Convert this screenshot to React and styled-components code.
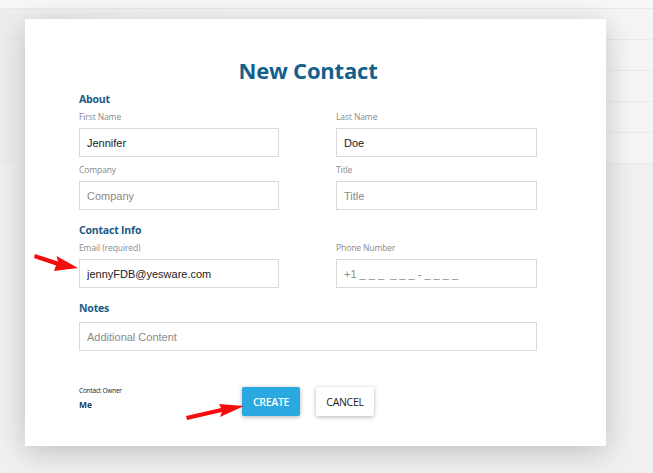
import React from "react";
import styled, { createGlobalStyle } from "styled-components";

const GlobalStyle = createGlobalStyle`
	html, body {
		margin: 0;
		padding: 0;
		background: #f0f0f0;
		font-family: "Liberation Sans", Arial, sans-serif;
	}
	#root {
		position: relative;
		width: 653px;
		height: 473px;
		overflow: hidden;
	}
`;

const S = {};
// faded list behind the modal
S.backdrop = styled.div`
	display: flex;
	flex-direction: column;
	width: 100%;
	height: 100%;
	background: #f0f0f0;
`;
S.topStrip = styled.div`
	height: 8px;
	background: #f7f7f7;
	border-bottom: 1px solid #e9e9e9;
`;
S.listRow = styled.div`
	height: 30px;
	background: linear-gradient(90deg, #eeeeee 0%, #f4f4f4 30%, #f5f5f5 100%);
	border-bottom: 1px solid #ebebeb;
`;

// modal
S.modal = styled.div`
	position: absolute;
	left: 25px;
	top: 19px;
	width: 581px;
	height: 427px;
	box-sizing: border-box;
	padding: 38px 69px 0 54px;
	background: #fff;
	box-shadow: 0 6px 28px rgba(0, 0, 0, 0.2);
	display: flex;
	flex-direction: column;
`;
S.title = styled.h1`
	margin: 0;
	text-align: center;
	font-family: "Open Sans", "Noto Sans", sans-serif;
	font-weight: 700;
	font-size: 22px;
	line-height: 26px;
	letter-spacing: -0.2px;
	color: #145f8c;
`;
S.sectionTitle = styled.h2`
	margin: ${(p) => p.$top || 0}px 0 0;
	font-family: "Open Sans", "Noto Sans", sans-serif;
	font-weight: 700;
	font-size: 10.5px;
	line-height: 14px;
	letter-spacing: -0.2px;
	color: #1b5a86;
`;
S.grid = styled.div`
	display: grid;
	grid-template-columns: 200px 201px;
	column-gap: 57px;
	row-gap: 7px;
	margin-top: 5px;
`;
S.field = styled.div`
	display: flex;
	flex-direction: column;
	gap: 5px;
`;
S.label = styled.label`
	font-family: "Open Sans", "Noto Sans", sans-serif;
	font-size: 8.5px;
	line-height: 12px;
	letter-spacing: -0.1px;
	color: #8a8a8a;
`;
S.input = styled.input`
	box-sizing: border-box;
	width: ${(p) => p.$width || "100%"};
	height: 29px;
	margin: ${(p) => p.$top || 0}px 0 0;
	padding: 0 7px;
	border: 1px solid #d9d9d9;
	border-radius: 0;
	outline: none;
	font-family: "Liberation Sans", Arial, sans-serif;
	font-size: 11px;
	color: #222;
	&::placeholder {
		color: #8a8a8a;
	}
`;
S.footer = styled.div`
	display: flex;
	align-items: flex-start;
	margin-top: 36px;
`;
S.owner = styled.div`
	width: 163px;
	display: flex;
	flex-direction: column;
`;
S.ownerLabel = styled.span`
	font-family: "Open Sans", "Noto Sans", sans-serif;
	font-size: 6.5px;
	line-height: 8px;
	letter-spacing: -0.2px;
	color: #1a1a1a;
`;
S.ownerName = styled.span`
	margin-top: 5px;
	font-family: "Open Sans", "Noto Sans", sans-serif;
	font-weight: 700;
	font-size: 8.5px;
	line-height: 10px;
	color: #1d3f63;
`;
S.buttons = styled.div`
	display: flex;
	gap: 16px;
`;
S.button = styled.button`
	width: 58px;
	height: 29px;
	padding: 0;
	border: none;
	border-radius: 2px;
	font-family: "Open Sans", "Noto Sans", sans-serif;
	font-weight: ${(p) => (p.$primary ? 600 : 400)};
	font-size: 10.5px;
	letter-spacing: -0.3px;
	color: ${(p) => (p.$primary ? "#fff" : "#1a1a1a")};
	background: ${(p) => (p.$primary ? "#2aa9e0" : "#fff")};
	box-shadow: 0 1px 4px rgba(0, 0, 0, 0.3);
`;
S.arrow = styled.svg`
	position: absolute;
	left: ${(p) => p.$x}px;
	top: ${(p) => p.$y}px;
	overflow: visible;
`;

function Field({ label, value, placeholder }) {
	return (
		<S.field>
			<S.label>{label}</S.label>
			<S.input defaultValue={value} placeholder={placeholder} />
		</S.field>
	);
}

function App() {
	return (
		<>
			<GlobalStyle />
			<S.backdrop>
				<S.topStrip />
				{[0, 1, 2, 3, 4].map((i) => (
					<S.listRow key={i} />
				))}
			</S.backdrop>

			<S.modal>
				<S.title>New Contact</S.title>

				<S.sectionTitle $top={9}>About</S.sectionTitle>
				<S.grid>
					<Field label="First Name" value="Jennifer" />
					<Field label="Last Name" value="Doe" />
					<Field label="Company" placeholder="Company" />
					<Field label="Title" placeholder="Title" />
				</S.grid>

				<S.sectionTitle $top={13}>Contact Info</S.sectionTitle>
				<S.grid>
					<Field label="Email (required)" value="jennyFDB@yesware.com" />
					<Field label="Phone Number" placeholder="+1 _ _ _  _ _ _ - _ _ _ _" />
				</S.grid>

				<S.sectionTitle $top={13}>Notes</S.sectionTitle>
				<S.input $width="458px" $top={7} placeholder="Additional Content" />

				<S.footer>
					<S.owner>
						<S.ownerLabel>Contact Owner</S.ownerLabel>
						<S.ownerName>Me</S.ownerName>
					</S.owner>
					<S.buttons>
						<S.button $primary>CREATE</S.button>
						<S.button>CANCEL</S.button>
					</S.buttons>
				</S.footer>
			</S.modal>

			{/* annotation arrows */}
			<S.arrow $x={34} $y={252} width="46" height="22" viewBox="0 0 46 22">
				<polygon points="1,2 24,9.5 22.5,4 44,16 20,19 22,13.5 0,6" fill="#f50c0c" />
			</S.arrow>
			<S.arrow $x={186} $y={403} width="60" height="24" viewBox="0 0 60 24">
				<polygon points="1,17 36,9 34,14 58,3 33,1 35,5 0,13" fill="#f50c0c" />
			</S.arrow>
		</>
	);
}

export default App;
